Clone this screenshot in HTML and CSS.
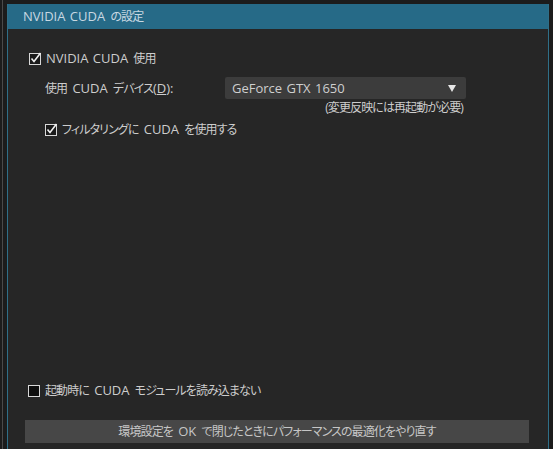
FILE: index.html
```html
<!DOCTYPE html>
<html lang="ja">
<head>
<meta charset="utf-8">
<link rel="stylesheet" href="styles.css">
</head>
<body>
<div class="frame">
  <div class="rail"><div class="rail-line"></div></div>
  <div class="panel">
    <div class="header"><span class="en">NVIDIA CUDA</span> の設定</div>
    <div class="body">
      <div class="row check-row first">
        <span class="cb"><svg width="13" height="13" viewBox="0 0 13 13"><rect x="0.5" y="1.5" width="11" height="11" fill="#1a1a1a" stroke="#d8d8d8"/><path d="M2.5 6.5 L5 9.5 L11.5 1" fill="none" stroke="#f0f0f0" stroke-width="1.6"/></svg></span>
        <span><span class="en">NVIDIA CUDA</span> 使用</span>
      </div>
      <div class="device">
        <span class="device-label">使用 <span class="en">CUDA</span> デバイス<span class="en">(<u>D</u>):</span></span>
        <div class="select-wrap">
          <div class="select"><span class="en">GeForce GTX 1650</span><span class="arrow"></span></div>
          <div class="note">(変更反映には再起動が必要)</div>
        </div>
      </div>
      <div class="row check-row sub">
        <span class="cb"><svg width="13" height="13" viewBox="0 0 13 13"><rect x="0.5" y="1.5" width="11" height="11" fill="#1a1a1a" stroke="#d8d8d8"/><path d="M2.5 6.5 L5 9.5 L11.5 1" fill="none" stroke="#f0f0f0" stroke-width="1.6"/></svg></span>
        <span>フィルタリングに <span class="en">CUDA</span> を使用する</span>
      </div>
      <div class="spacer"></div>
      <div class="row check-row last">
        <span class="cb"><svg width="13" height="13" viewBox="0 0 13 13"><rect x="0.5" y="1.5" width="11" height="11" fill="#0e0e0e" stroke="#d8d8d8"/></svg></span>
        <span>起動時に <span class="en">CUDA</span> モジュールを読み込まない</span>
      </div>
      <div class="button">環境設定を <span class="en">OK</span> で閉じたときにパフォーマンスの最適化をやり直す</div>
    </div>
  </div>
</div>
</body>
</html>
```

FILE: styles.css
```css
html, body {
  margin: 0;
  padding: 0;
  background: #1c1c1c;
  height: 449px;
  overflow: hidden;
  font-family: "Open Sans", "Noto Sans CJK JP", sans-serif;
  font-feature-settings: "palt";
  font-size: 12px;
  letter-spacing: -0.9px;
  word-spacing: 3px;
  color: #cdcdcd;
}
.en {
  font-size: 13px;
  letter-spacing: 0;
  word-spacing: 1px;
}
.frame {
  display: flex;
  height: 449px;
}
.rail {
  width: 7px;
  flex: none;
}
.rail-line {
  margin-left: 2px;
  width: 1px;
  height: 100%;
  background: #4a4a4a;
}
.panel {
  width: 540px;
  margin-top: 4px;
  height: 460px;
  background: #262626;
  border-left: 1px solid #2f6f88;
  border-right: 1px solid #2f6f88;
  display: flex;
  flex-direction: column;
}
.header {
  height: 25px;
  background: #266a87;
  color: #c8d8e2;
  line-height: 25px;
  padding-left: 15px;
  flex: none;
}
.body {
  display: flex;
  flex-direction: column;
  padding: 0 19px 0 17px;
  flex: 1;
}
.check-row {
  display: flex;
  align-items: center;
  gap: 4px;
  height: 18px;
}
.cb {
  display: flex;
  width: 13px;
  height: 13px;
}
.first {
  margin-top: 20px;
  padding-left: 4px;
}
.device {
  display: flex;
  margin-top: 10px;
  padding-left: 20px;
}
.device-label {
  width: 180px;
  line-height: 22px;
}
.select-wrap {
  display: flex;
  flex-direction: column;
  align-items: flex-end;
  width: 241px;
}
.select {
  width: 100%;
  box-sizing: border-box;
  height: 22px;
  background: #3c3c3c;
  border-radius: 2px;
  display: flex;
  align-items: center;
  justify-content: space-between;
  padding: 0 10px 0 7px;
  color: #cfcfcf;
}
.arrow {
  width: 0;
  height: 0;
  border-left: 4px solid transparent;
  border-right: 4px solid transparent;
  border-top: 7px solid #e8e8e8;
}
.note {
  line-height: 17px;
  margin-right: 3px;
}
.sub {
  margin-top: 4px;
  padding-left: 20px;
}
.spacer {
  flex: 1;
}
.last {
  padding-left: 3px;
}
.button {
  margin-top: 21px;
  width: 504px;
  height: 23px;
  line-height: 23px;
  background: #474747;
  color: #c6c6c6;
  text-align: center;
  margin-bottom: 21px;
}
```
